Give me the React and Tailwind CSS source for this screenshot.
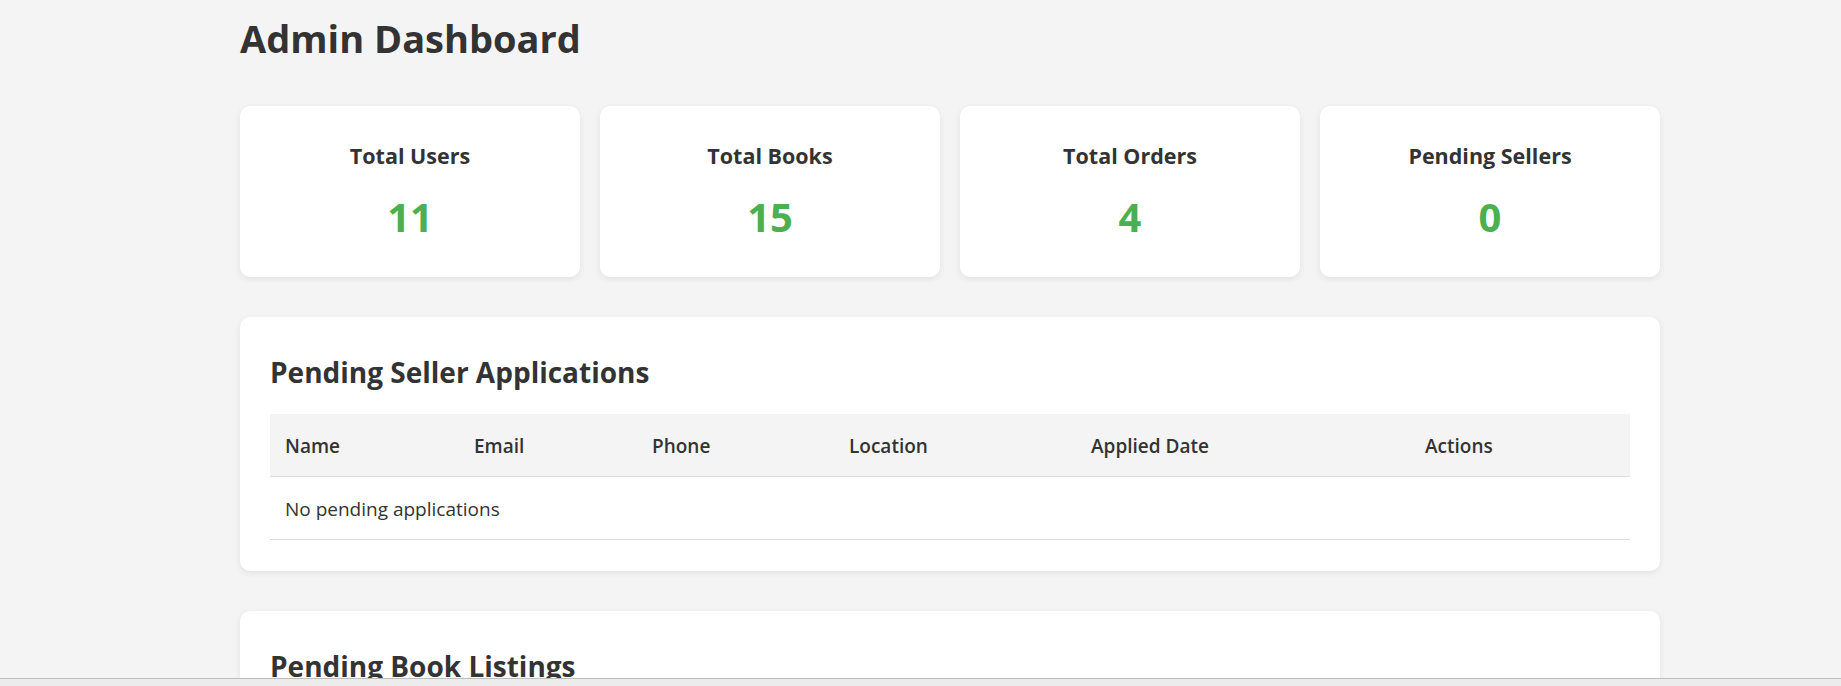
import React from 'react';

const stats = [
    { label: 'Total Users', value: 11 },
    { label: 'Total Books', value: 15 },
    { label: 'Total Orders', value: 4 },
    { label: 'Pending Sellers', value: 0 },
];

const sellerCols = ['Name', 'Email', 'Phone', 'Location', 'Applied Date', 'Actions'];
const bookCols = ['Title', 'Author', 'Seller', 'Price', 'Listed Date', 'Actions'];

const Section = ({ title, cols, empty }) => (
    <div className="bg-white rounded-[10px] shadow-[0_2px_6px_rgba(0,0,0,0.08)] px-[30px] pt-[30px] pb-[31px]">
        <h2 className="mt-[7px] mb-[23px] text-[28px] leading-[37px] font-bold">{title}</h2>
        <div className="grid grid-cols-[189px_178px_197px_242px_334px_220px] text-[19px]">
            {cols.map((c) => (
                <div key={c} className="h-[63px] flex items-center pl-[15px] pt-[3px] bg-[#f4f4f4] border-b border-[#dddddd] font-semibold">
                    {c}
                </div>
            ))}
            <div className="col-span-6 h-[63px] flex items-center pl-[15px] pt-[3px] border-b border-[#dddddd]">{empty}</div>
        </div>
    </div>
);

export default function App() {
    return (
        <div className="min-h-[900px] bg-[#f4f4f4] font-['Open_Sans',sans-serif] text-[#333333]">
            <div className="ml-[240px] w-[1420px] pb-[40px]">
                <div className="h-[106px] pt-[12px]">
                    <h1 className="text-[38px] leading-[52px] font-bold">Admin Dashboard</h1>
                </div>

                <div className="grid grid-cols-4 gap-[20px]">
                    {stats.map((s) => (
                        <div key={s.label} className="h-[171px] bg-white rounded-[10px] shadow-[0_2px_6px_rgba(0,0,0,0.08)] flex flex-col items-center pt-[35px]">
                            <h3 className="text-[21.5px] leading-[30px] font-bold">{s.label}</h3>
                            <div className="mt-[19px] text-[40px] leading-[54px] font-bold text-[#4caf50]">{s.value}</div>
                        </div>
                    ))}
                </div>

                <div className="mt-[40px] flex flex-col gap-[40px]">
                    <Section title="Pending Seller Applications" cols={sellerCols} empty="No pending applications" />
                    <Section title="Pending Book Listings" cols={bookCols} empty="No pending listings" />
                </div>
            </div>

            {/* bottom browser strip */}
            <div className="fixed bottom-0 left-0 right-0 h-[8px] bg-[#ececec] border-t border-[#bdbdbd]" />
        </div>
    );
}
